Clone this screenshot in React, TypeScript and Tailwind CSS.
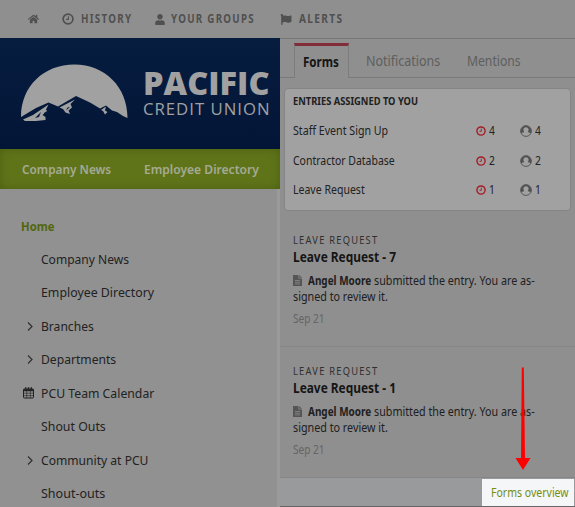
import { useLayoutEffect, useRef, useState } from 'react';
import { FaHome, FaUser, FaFlag } from 'react-icons/fa';

type LabelProps = { text: string; width: number; className?: string };

/** A single line of text condensed horizontally so that it fills its column. */
function Label({ text, width, className = '' }: LabelProps) {
  const ref = useRef<HTMLSpanElement>(null);
  const [scale, setScale] = useState(1);
  useLayoutEffect(() => {
    if (ref.current) setScale(width / ref.current.offsetWidth);
  }, [width, text]);
  return (
    <span className={`inline-flex shrink-0 whitespace-nowrap ${className}`} style={{ width }}>
      <span ref={ref} className="inline-block shrink-0 origin-left" style={{ transform: `scaleX(${scale})` }}>
        {text}
      </span>
    </span>
  );
}

function Clock({ className }: { className: string }) {
  return (
    <svg viewBox="0 0 12 12" className={className} fill="none" stroke="currentColor">
      <circle cx="6" cy="6" r="4.9" strokeWidth="1.7" />
      <path d="M6.4 3.2v3.2H4.2" strokeWidth="1.1" />
    </svg>
  );
}

function Person() {
  return (
    <svg viewBox="0 0 12 12" className="size-3 shrink-0 text-[#505050]">
      <circle cx="6" cy="6" r="5.4" fill="none" stroke="currentColor" strokeWidth="0.9" />
      <path
        fillRule="evenodd"
        d="M6 .8a5.200 5.200 0 0 1 4.700 7.400C9.800 7.600 8.800 7.400 7.700 7.200 8.300 6.500 8.600 5.600 8.600 4.700 8.600 3.200 7.500 2.300 6 2.300S3.400 3.200 3.400 4.700c0 .9.3 1.800.9 2.500-1.100.2-2.100.4-3 1A5.200 5.200 0 0 1 6 .8Z"
        fill="currentColor"
      />
    </svg>
  );
}

function FileIcon() {
  return (
    <svg viewBox="0 0 9 11" className="h-[11px] w-[9px] shrink-0 text-[#555]">
      <path d="M0 0h5.500v3.500H9V11H0ZM6.300 0 9 2.800H6.300Z" fill="currentColor" />
      <path d="M2 5.500h5M2 7.200h5M2 8.900h5" stroke="#8f8f8f" strokeWidth=".7" />
    </svg>
  );
}

function CalendarIcon() {
  return (
    <svg viewBox="0 0 11 12" className="h-3 w-[11px] text-[#222]" fill="none" stroke="currentColor">
      <rect x=".5" y="2" width="10" height="9" rx=".7" />
      <path d="M.5 3.200h10" strokeWidth="2" />
      <path d="M2.700.3v2.500M5.500.3v2.500M8.300.3v2.500" strokeWidth="1.400" />
      <path d="M1 6.200h9M1 8.600h9M3.700 4v7M7.300 4v7" strokeWidth=".6" />
    </svg>
  );
}

const entries = [
  { name: 'Staff Event Sign Up', width: 95, count: '4' },
  { name: 'Contractor Database', width: 102, count: '2' },
  { name: 'Leave Request', width: 72, count: '1' },
];

const pages = [
  { name: 'Company News', width: 88 },
  { name: 'Employee Directory', width: 113 },
  { name: 'Branches', width: 53, icon: 'chevron' },
  { name: 'Departments', width: 75.5, icon: 'chevron' },
  { name: 'PCU Team Calendar', width: 113, icon: 'calendar' },
  { name: 'Shout Outs', width: 64.5 },
  { name: 'Community at PCU', width: 107, icon: 'chevron' },
  { name: 'Shout-outs', width: 64.5 },
];

function FeedItem({ title, width }: { title: string; width: number }) {
  return (
    <article className="h-[131px] border-b border-[#868686] pl-[13px] pt-[17px]">
      <div className="flex h-[14px] items-center text-[10px] tracking-[1.3px] text-[#303030]">
        <Label text="LEAVE REQUEST" width={85} />
      </div>
      <h2 className="flex h-5 items-center text-[13.500px] font-bold text-[#151515]">
        <Label text={title} width={width} />
      </h2>
      <div className="mt-[5px] flex h-[17px] items-center text-[12px] leading-[17px] text-[#202020]">
        <FileIcon />
        <Label text="Angel Moore" width={63} className="ml-[6px] font-bold" />
        <Label text="submitted the entry. You are as-" width={161} className="ml-[3px]" />
      </div>
      <div className="flex h-4 items-center text-[12px] text-[#202020]">
        <Label text="signed to review it." width={95} />
      </div>
      <div className="mt-[6px] flex h-4 items-center text-[12px] text-[#656565]">
        <Label text="Sep 21" width={32} />
      </div>
    </article>
  );
}

export default function App() {
  return (
    <div className="relative flex h-[507px] w-[575px] flex-col overflow-hidden bg-[#8f8f8f] font-['Noto_Sans',sans-serif] text-[#222]">
      <header className="flex h-[38px] shrink-0 items-center pl-[28px] text-[11.500px] font-bold tracking-[1.500px] text-[#505050]">
        <FaHome className="h-[12px] w-[11px]" />
        <Clock className="ml-[23px] size-3" />
        <Label text="HISTORY" width={51} className="ml-[7px]" />
        <FaUser className="ml-[23px] h-[11px] w-[10px]" />
        <Label text="YOUR GROUPS" width={84} className="ml-[6px]" />
        <FaFlag className="ml-[25px] h-[11px] w-3" />
        <Label text="ALERTS" width={44} className="ml-[7px]" />
      </header>

      <div className="flex min-h-0 grow">
        <div className="flex w-[280px] shrink-0 flex-col">
          <div className="flex h-[111px] shrink-0 bg-linear-to-b from-[#061d40] to-[#031536] pl-[21px]">
            <svg viewBox="0 0 107 58" className="mt-[25.500px] h-[58px] w-[107px]" fill="#a1a1a1">
              <path d="M0 53C0 22 23 .5 53.500.5S106.500 23 106.500 54L102 52 96 48 91 46.500 85 41.500 79 44.500 69 38.500 55 32 37 42.500 27.500 38.500 15 44Z" />
              <path d="M2 55.500 12 51 27.500 40.500 25 45.500 26 47 21.500 51 24.500 53V56L15 57 4 57ZM38.500 43.500 54 35.500 49.500 40 51 43.500 47.500 46.500 49 50 44.500 48.500 42 45ZM80 46 85 42.500 84 46.500 86.500 48 84 50.500 82 47Z" />
              <path d="M14 54 20 48 18 53ZM23 49 25 47.500 23.500 51ZM45 46.500 49 43 46.500 43.500Z" fill="#04183a" />
            </svg>
            <div className="ml-[15px] flex flex-col pt-[26px] font-['Open_Sans',sans-serif] text-[#a1a1a1]">
              <div className="flex h-[37px] items-center text-[32px] font-extrabold leading-[36px]">
                <Label text="PACIFIC" width={127} />
              </div>
              <div className="flex h-[16px] items-center text-[17px] leading-4 tracking-[1px]">
                <Label text="CREDIT UNION" width={127} />
              </div>
            </div>
          </div>
          <nav className="flex h-[40px] shrink-0 items-center bg-[#5f7419] pl-[22px] pt-px text-[13px] font-semibold text-[#a6aa94] shadow-[inset_0_0_10px_rgba(40,60,0,0.35)]">
            <Label text="Company News" width={89} />
            <Label text="Employee Directory" width={115} className="ml-[33px]" />
          </nav>
          <aside className="grow border-r-[3px] border-[#9a9a9a] bg-[#919191] pt-[20px] text-[13px]">
            <div className="flex h-[33.500px] items-center pl-[21px] pt-px font-bold text-[#52660f]">
              <Label text="Home" width={34} />
            </div>
            {pages.map((page) => (
              <div key={page.name} className="flex h-[33.500px] items-center">
                <span className="flex w-[41px] pl-[23px]">
                  {page.icon === 'calendar' && <CalendarIcon />}
                  {page.icon === 'chevron' && (
                    <svg viewBox="0 0 6 9" className="ml-[4px] h-[9px] w-[6px]" fill="none" stroke="#303030">
                      <path d="m1 .5 4 4-4 4" strokeWidth="1.200" />
                    </svg>
                  )}
                </span>
                <Label text={page.name} width={page.width} />
              </div>
            ))}
          </aside>
        </div>

        <main className="flex grow flex-col border-t border-[#777]">
          <div className="flex h-[39px] shrink-0 items-end border-b border-[#797979] text-[13.500px] text-[#5e5e5e]">
            <div className="mb-[-1px] ml-[14px] flex h-[35px] w-[55px] items-center border-x border-t-[3px] border-x-[#7c7c7c] border-t-[#832d38] bg-[#8f8f8f] pl-[8px] font-bold text-[#151515]">
              <Label text="Forms" width={36} />
            </div>
            <div className="ml-[17px] flex h-[32px] items-center">
              <Label text="Notifications" width={74} />
              <Label text="Mentions" width={54} className="ml-[27px]" />
            </div>
          </div>

          <section className="ml-1 mt-[10px] h-[123px] w-[287px] shrink-0 rounded-[4px] border border-[#858585] bg-[#a1a1a1] pl-[8px] pt-[4px]">
            <h3 className="flex h-[17px] items-center text-[10px] font-bold text-[#202020]">
              <Label text="ENTRIES ASSIGNED TO YOU" width={125} />
            </h3>
            <div className="pt-[6.400px]">
              {entries.map((entry) => (
                <div key={entry.name} className="flex h-[29.500px] items-center text-[12px]">
                  <div className="flex w-[183px]">
                    <Label text={entry.name} width={entry.width} />
                  </div>
                  <Clock className="size-[10px] text-[#a51e27]" />
                  <Label text={entry.count} width={6} className="ml-[3px] mr-[25px]" />
                  <Person />
                  <Label text={entry.count} width={6} className="ml-[3px]" />
                </div>
              ))}
            </div>
          </section>

          <div className="flex shrink-0 flex-col pt-[5px]">
            <FeedItem title="Leave Request - 7" width={103} />
            <FeedItem title="Leave Request - 1" width={103} />
          </div>

          <footer className="flex min-h-0 grow justify-end border-b border-[#666] bg-[#999a9c] pr-px pt-px">
            <div className="flex w-[92px] items-center bg-[#f5f6f7] pl-[9px] text-[12px] text-[#748d12]">
              <Label text="Forms overview" width={78} />
            </div>
          </footer>
        </main>
      </div>

      <svg viewBox="0 0 16 104" className="absolute left-[515px] top-[367px] h-[104px] w-4" fill="#ff0000">
        <path d="M6.800.5h2L10 91h5.500L8 103 .5 91H6Z" />
      </svg>
    </div>
  );
}
